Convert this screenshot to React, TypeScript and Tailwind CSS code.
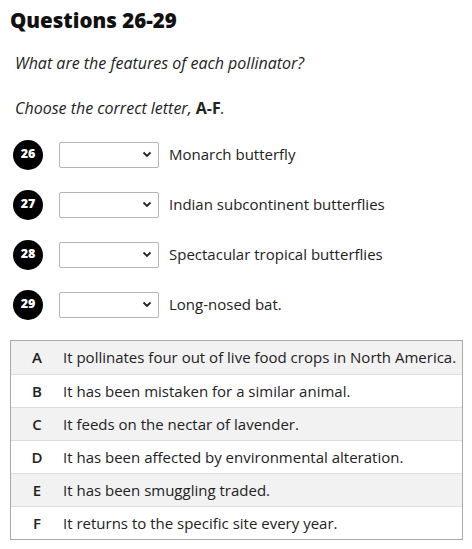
import React from "react";

const qs = [
  { n: 26, t: "Monarch butterfly" },
  { n: 27, t: "Indian subcontinent butterflies" },
  { n: 28, t: "Spectacular tropical butterflies" },
  { n: 29, t: "Long-nosed bat." },
];

const opts = [
  ["A", "It pollinates four out of live food crops in North America."],
  ["B", "It has been mistaken for a similar animal."],
  ["C", "It feeds on the nectar of lavender."],
  ["D", "It has been affected by environmental alteration."],
  ["E", "It has been smuggling traded."],
  ["F", "It returns to the specific site every year."],
];

export default function App() {
  return (
    <div className="w-[472px] h-[549px] bg-white text-[#222] font-['Open_Sans','Noto_Sans',sans-serif]">
      <div className="pl-[10px] pt-[7px]">
        <h1 className="text-[20.5px] leading-[26px] font-extrabold text-[#111] font-['Open_Sans',sans-serif]">
          Questions 26-29
        </h1>
        <p className="mt-[20px] pl-[5px] text-[16px] leading-[20px] italic">
          What are the features of each pollinator?
        </p>
        <p className="mt-[25px] pl-[5px] text-[16px] leading-[20px] italic">
          Choose the correct letter, <b className="not-italic font-bold">A-F</b>.
        </p>
        <div className="mt-[22px] flex flex-col gap-[21px]">
          {qs.map((q) => (
            <div key={q.n} className="flex items-center h-[29px]">
              <div className="w-[30px] h-[30px] ml-[3px] rounded-full bg-black text-white flex items-center justify-center text-[12.5px] font-black font-['Open_Sans',sans-serif]">
                {q.n}
              </div>
              <div className="ml-[16px] w-[100px] h-[26px] border border-[#b5b5b5] rounded-[2px] bg-white flex items-center justify-end pr-[6px]">
                <svg width="10" height="7" viewBox="0 0 10 7">
                  <path d="M1.5 1.5 L5 5 L8.5 1.5" fill="none" stroke="#222" strokeWidth="1.8" />
                </svg>
              </div>
              <span className="ml-[10px] text-[15px]">{q.t}</span>
            </div>
          ))}
        </div>
        <div className="mt-[21px] w-[453px] border border-[#aaa]">
          {opts.map(([l, t], i) => (
            <div
              key={l}
              className={
                "flex items-center h-[33px] text-[15px] " +
                (i > 0 ? "border-t border-[#ddd] " : "") +
                (i % 2 === 0 ? "bg-[#f2f2f2]" : "bg-white")
              }
            >
              <span className="w-[52px] text-center font-semibold">{l}</span>
              <span>{t}</span>
            </div>
          ))}
        </div>
      </div>
    </div>
  );
}
